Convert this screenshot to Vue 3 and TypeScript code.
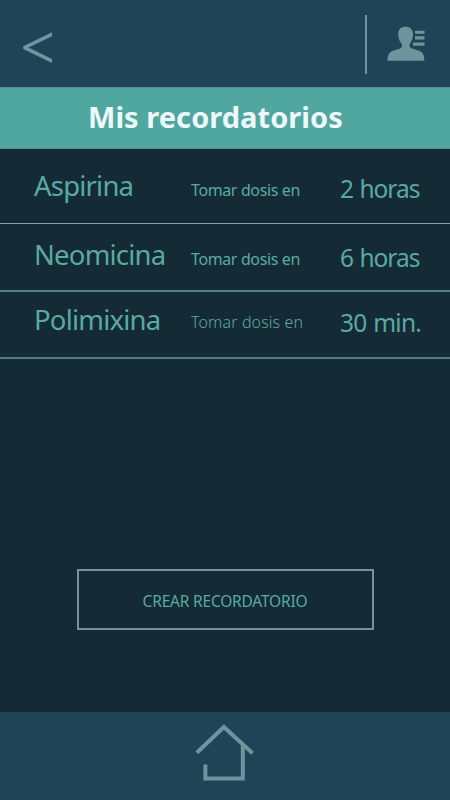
<script setup lang="ts">
interface Reminder {
  name: string
  label: string
  time: string
  variant: string
}

const reminders: Reminder[] = [
  { name: 'Aspirina', label: 'Tomar dosis en', time: '2 horas', variant: 'first' },
  { name: 'Neomicina', label: 'Tomar dosis en', time: '6 horas', variant: 'second' },
  { name: 'Polimixina', label: 'Tomar dosis en', time: '30 min.', variant: 'third' },
]
</script>

<template>
  <div class="screen">
    <header class="topbar">
      <button class="icon-button back" aria-label="Volver">
        <svg width="30" height="32" viewBox="0 0 30 32">
          <path d="M29 .3V4.2L5.5 15.6 29 27V31L.2 16.9V14.3Z" fill="#6f949e" />
        </svg>
      </button>
      <div class="account">
        <span class="divider"></span>
        <button class="icon-button profile" aria-label="Perfil">
          <svg width="38" height="36" viewBox="0 0 38 36">
            <path
              d="M18.5.8C23 .8 26 3.5 26 8C26 12 25.2 15 22.6 18V20.5C23.2 22 25 22.5 28 23.5C34.5 25.2 37.3 26.5 37.3 34.8H.5C.5 27 3.5 25.2 9.8 23.5C13 22.5 14.4 22 14.9 20.4V18C12.2 15 11.2 12 11.2 8C11.2 3.5 14 .8 18.5.8Z"
              fill="#6f949e"
            />
            <path d="M28 4.8H37.5V7.8H28ZM28 10.2H37.5V13.6H28ZM26 16.4H37.5V19.8H26Z" fill="#6f949e" />
          </svg>
        </button>
      </div>
    </header>

    <div class="title-band">
      <h1>Mis recordatorios</h1>
    </div>

    <main>
      <ul class="list">
        <li v-for="item in reminders" :key="item.name" class="row" :class="item.variant">
          <span class="name">{{ item.name }}</span>
          <span class="label">{{ item.label }}</span>
          <span class="time">{{ item.time }}</span>
        </li>
      </ul>
      <button class="create">CREAR RECORDATORIO</button>
    </main>

    <footer class="bottombar">
      <button class="icon-button" aria-label="Inicio">
        <svg width="60" height="58" viewBox="0 0 60 58" fill="none" stroke="#6f949e" stroke-width="4">
          <path d="M1.8 29.8 28.9 4 57.5 30.3" />
          <path d="M10.4 41.5V55.5H47.8V22" />
        </svg>
      </button>
    </footer>
  </div>
</template>

<style>
body {
  margin: 0;
  background: #142b35;
}
</style>

<style scoped>
.screen {
  display: flex;
  flex-direction: column;
  width: 450px;
  height: 800px;
  overflow: hidden;
  background: #142b35;
  color: #5aa9a3;
  font-family: 'Noto Sans', 'Open Sans', sans-serif;
}

button {
  margin: 0;
  padding: 0;
  border: 0;
  background: none;
  font-family: inherit;
  color: inherit;
}

.icon-button,
.icon-button svg {
  display: block;
}

.topbar {
  box-sizing: border-box;
  flex: none;
  display: flex;
  justify-content: space-between;
  align-items: flex-start;
  height: 87px;
  padding: 15px 25px 0 23px;
  background: #204457;
}

.back {
  padding-top: 17px;
}

.account {
  display: flex;
  align-items: flex-start;
  gap: 20px;
}

.divider {
  width: 2px;
  height: 59px;
  background: #6f949e;
}

.profile {
  padding-top: 11px;
}

.title-band {
  box-sizing: border-box;
  flex: none;
  height: 62px;
  padding-left: 88px;
  border-top: 1px solid #5d9497;
  border-bottom: 1px solid #5d8d8b;
  background: #50a79f;
}

h1 {
  margin: 0;
  font-size: 29px;
  line-height: 58px;
  font-weight: 700;
  letter-spacing: 0.05px;
  white-space: nowrap;
  color: #eef8fb;
}

main {
  flex: 1;
  display: flex;
  flex-direction: column;
  align-items: center;
}

.list {
  width: 100%;
  margin: 0;
  padding: 0;
  list-style: none;
}

.row {
  box-sizing: border-box;
  display: grid;
  grid-template-columns: 157px 149px 1fr;
  align-items: start;
  padding-left: 34px;
  border-bottom: 2px solid #547c83;
  white-space: nowrap;
}

.name {
  font-size: 27.5px;
  line-height: 40px;
  letter-spacing: -0.8px;
}

.label {
  font-size: 16px;
  line-height: 24px;
  letter-spacing: -0.38px;
}

.time {
  padding-top: 5px;
  font-size: 24.5px;
  line-height: 36px;
  letter-spacing: -1px;
  word-spacing: 1px;
}

.first {
  height: 75px;
  padding-top: 17px;
  border-bottom: 1px solid #7ba0a7;
}

.second {
  height: 68px;
  padding-top: 11px;
}

.third {
  height: 67px;
  padding-top: 8px;
}

.first .label,
.second .label {
  padding-top: 12px;
}

.third .label {
  padding-top: 10px;
  font-weight: 300;
  letter-spacing: 0.12px;
}

.third .time {
  letter-spacing: -0.75px;
}

.create {
  box-sizing: border-box;
  width: 297px;
  height: 61px;
  margin-top: 210px;
  padding-top: 2px;
  border: 2px solid #6f949e;
  font-size: 15.5px;
  letter-spacing: -0.2px;
}

.bottombar {
  box-sizing: border-box;
  flex: none;
  display: flex;
  align-items: flex-start;
  justify-content: center;
  height: 88px;
  padding-top: 11px;
  background: #204457;
}
</style>
